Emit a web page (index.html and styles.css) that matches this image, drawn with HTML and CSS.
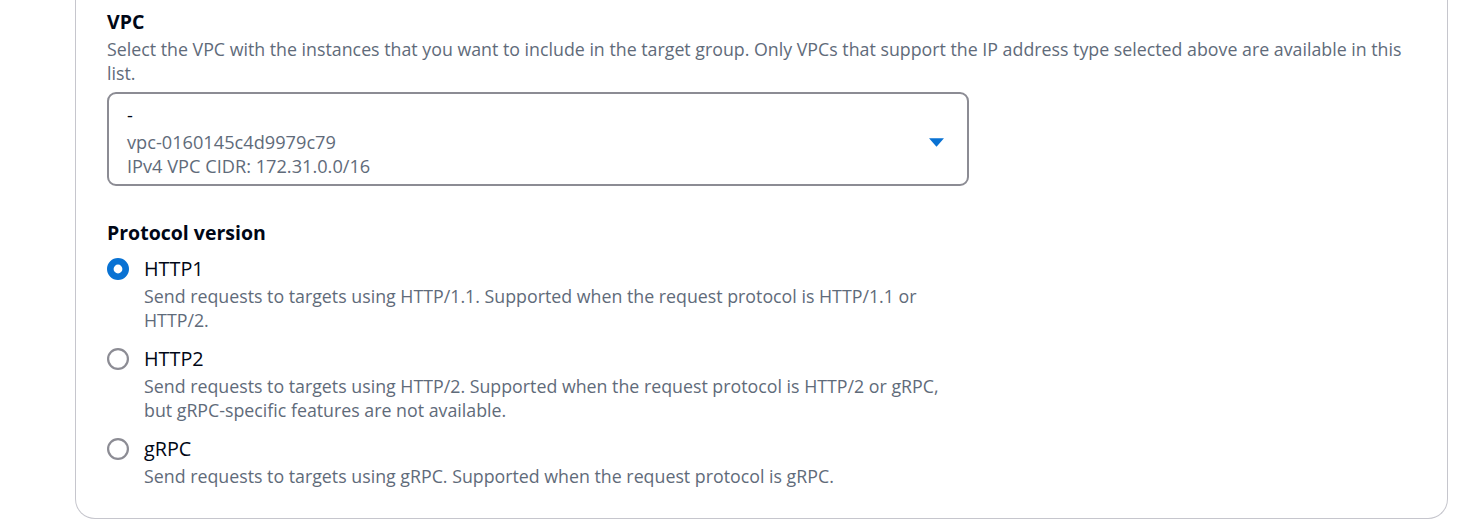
FILE: index.html
```html
<!DOCTYPE html>
<html lang="en">
<head>
<meta charset="utf-8">
<title>Target group</title>
<link rel="stylesheet" href="styles.css">
</head>
<body>
<div class="page">
  <div class="card">
    <div class="field">
      <div class="label">VPC</div>
      <div class="desc">Select the VPC with the instances that you want to include in the target group. Only VPCs that support the IP address type selected above are available in this list.</div>
      <div class="select">
        <div class="select-text">
          <div class="opt-label">-</div>
          <div class="opt-desc">vpc-0160145c4d9979c79</div>
          <div class="opt-desc">IPv4 VPC CIDR: 172.31.0.0/16</div>
        </div>
        <svg class="caret" viewBox="0 0 16 16" width="16" height="16" aria-hidden="true"><path d="M1 4h14l-7 8z" fill="#0972d3"/></svg>
      </div>
    </div>
    <div class="field field-protocol">
      <div class="label">Protocol version</div>
      <div class="radio-group">
        <div class="radio">
          <svg class="radio-ctl" viewBox="0 0 100 100" aria-hidden="true"><circle cx="50" cy="50" r="35" fill="#fff" stroke="#0972d3" stroke-width="30"/></svg>
          <div class="radio-body">
            <div class="radio-label">HTTP1</div>
            <div class="radio-desc">Send requests to targets using HTTP/1.1. Supported when the request protocol is HTTP/1.1 or HTTP/2.</div>
          </div>
        </div>
        <div class="radio">
          <svg class="radio-ctl" viewBox="0 0 100 100" aria-hidden="true"><circle cx="50" cy="50" r="45" fill="#fff" stroke="#8c8c94" stroke-width="10"/></svg>
          <div class="radio-body">
            <div class="radio-label">HTTP2</div>
            <div class="radio-desc">Send requests to targets using HTTP/2. Supported when the request protocol is HTTP/2 or gRPC, but gRPC-specific features are not available.</div>
          </div>
        </div>
        <div class="radio">
          <svg class="radio-ctl" viewBox="0 0 100 100" aria-hidden="true"><circle cx="50" cy="50" r="45" fill="#fff" stroke="#8c8c94" stroke-width="10"/></svg>
          <div class="radio-body">
            <div class="radio-label">gRPC</div>
            <div class="radio-desc">Send requests to targets using gRPC. Supported when the request protocol is gRPC.</div>
          </div>
        </div>
      </div>
    </div>
  </div>
</div>
</body>
</html>
```

FILE: styles.css
```css
* { box-sizing: border-box; }
html, body { margin: 0; padding: 0; background: #fff; }
body {
  font-family: "Open Sans", "Noto Sans", sans-serif;
  color: #000716;
  font-size: 17.8px;
  line-height: 24px;
}
.page {
  padding: 0 21px 9px 75px;
}
.card {
  border: 1px solid #c6c6cd;
  border-top: none;
  border-radius: 0 0 20px 20px;
  padding: 9px 28px 30px 31px;
}
.label {
  font-weight: 700;
  font-size: 19.5px;
  line-height: 26px;
}
.desc {
  margin-top: 2px;
  color: #5f6b7a;
}
.select {
  margin-top: 7px;
  width: 862px;
  height: 94px;
  border: 2px solid #8c8c94;
  border-radius: 9px;
  display: flex;
  align-items: flex-start;
  justify-content: space-between;
  padding: 8px 22px 0 18px;
  font-size: 18.2px;
}
.opt-label { line-height: 26px; margin-bottom: 2px; color: #000716; }
.opt-desc { color: #5f6b7a; }
.caret { display: block; width: 17px; height: 17px; align-self: center; margin-bottom: 2px; }
.field-protocol { margin-top: 34px; }
.radio-group {
  margin-top: 10px;
  width: 862px;
  display: flex;
  flex-direction: column;
  gap: 14px;
}
.radio { display: flex; gap: 15px; align-items: flex-start; }
.radio-ctl { width: 22px; height: 22px; flex: none; margin-top: 2px; }
.radio-label { font-size: 19.8px; line-height: 26px; }
.radio-desc { margin-top: 2px; color: #5f6b7a; }
```
